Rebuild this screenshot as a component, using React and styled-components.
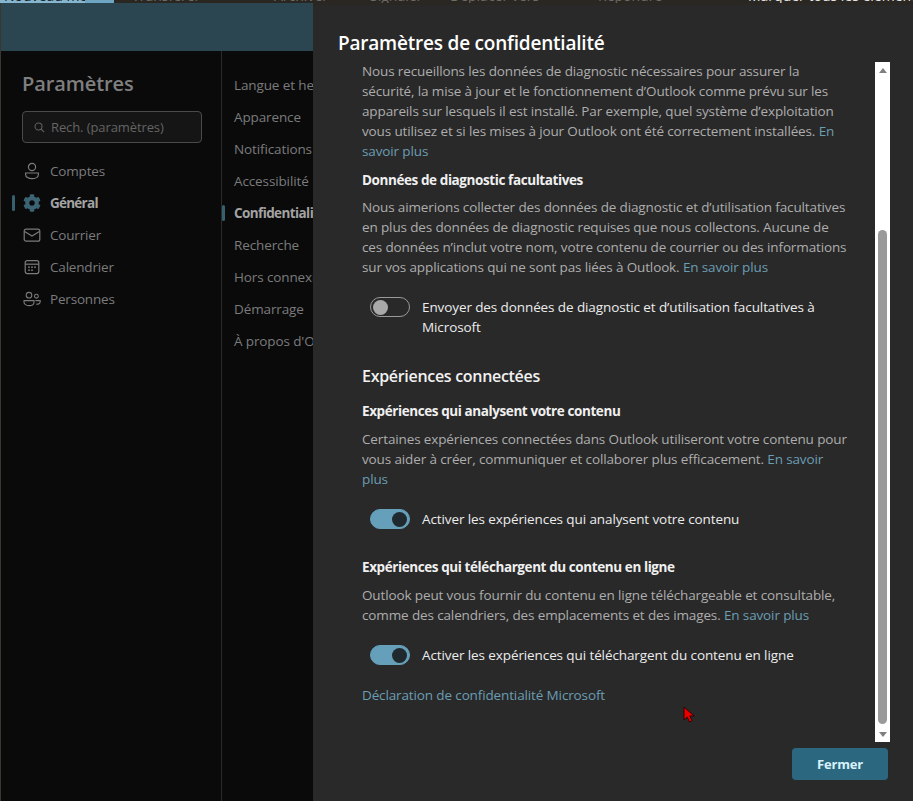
import React from "react";
import styled, { createGlobalStyle } from "styled-components";
import { FaCog } from "react-icons/fa";

const GlobalStyle = createGlobalStyle`
  html, body {
    margin: 0;
    padding: 0;
    background: #222;
  }
  * {
    box-sizing: border-box;
  }
`;

const Page = styled.div`
  position: relative;
  width: 913px;
  height: 801px;
  overflow: hidden;
  display: flex;
  flex-direction: column;
  background: #2a2622;
  font-family: "Open Sans", "Noto Sans", sans-serif;
`;

/* what is left of the mail toolbar behind the settings window */
const TopStrip = styled.div`
  height: 3px;
  flex: none;
  display: flex;
  overflow: hidden;
`;

const StripTab = styled.div`
  width: ${(p) => p.$w}px;
  flex: none;
  height: 3px;
  overflow: hidden;
  display: flex;
  align-items: flex-end;
  background: ${(p) => p.$bg || "transparent"};
  color: ${(p) => p.$color || "#6f6b65"};
  font-size: 14px;
  line-height: 14px;
  white-space: nowrap;
  padding-left: ${(p) => p.$pad || 0}px;
`;

const Main = styled.div`
  flex: 1;
  display: flex;
  min-height: 0;
`;

const SettingsWindow = styled.div`
  width: 313px;
  flex: none;
  display: flex;
  flex-direction: column;
  padding-left: 1px;
  background: #3a3733;
  overflow: hidden;
`;

const WindowHeader = styled.div`
  height: 48px;
  flex: none;
  background: #2b4650;
`;

const WindowBody = styled.div`
  flex: 1;
  display: flex;
  background: #0a0a0b;
`;

const Sidebar = styled.nav`
  width: 221px;
  flex: none;
  padding: 19px 0 0 21px;
  border-right: 1px solid #2b2b2b;
`;

const SidebarTitle = styled.h1`
  margin: 0 0 13px;
  font-size: 20px;
  line-height: 28px;
  font-weight: 600;
  color: #7f7f7f;
  letter-spacing: -0.1px;
`;

const SearchBox = styled.div`
  width: 180px;
  height: 32px;
  display: flex;
  align-items: center;
  gap: 6px;
  padding-left: 11px;
  margin-bottom: 12px;
  background: #151515;
  border: 1px solid #4a4a4a;
  border-radius: 4px;
  color: #646464;
  font-size: 13px;
  letter-spacing: -0.1px;
`;

const NavRow = styled.div`
  position: relative;
  height: 32px;
  display: flex;
  align-items: center;
  gap: 9px;
  padding-left: 1px;
  font-size: 13.5px;
  letter-spacing: ${(p) => (p.$active ? "-0.75px" : "-0.18px")};
  font-weight: ${(p) => (p.$active ? 700 : 400)};
  color: ${(p) => (p.$active ? "#a3a3a3" : "#7b7b7b")};

  &::before {
    content: "";
    display: ${(p) => (p.$active ? "block" : "none")};
    position: absolute;
    left: -10px;
    top: 8px;
    width: 3px;
    height: 16px;
    border-radius: 2px;
    background: #37606f;
  }

  svg {
    flex: none;
    width: 18px;
    height: 18px;
    color: ${(p) => (p.$active ? "#3c6373" : "#7b7b7b")};
  }
`;

const SubNav = styled.div`
  flex: 1;
  min-width: 0;
  padding-top: 18px;
  overflow: hidden;
`;

const SubRow = styled.div`
  position: relative;
  height: 32px;
  display: flex;
  align-items: center;
  padding-left: 12px;
  white-space: nowrap;
  font-size: 13.5px;
  letter-spacing: ${(p) => (p.$active ? "-0.6px" : "-0.12px")};
  font-weight: ${(p) => (p.$active ? 700 : 400)};
  color: ${(p) => (p.$active ? "#a3a3a3" : "#7b7b7b")};

  &::before {
    content: "";
    display: ${(p) => (p.$active ? "block" : "none")};
    position: absolute;
    left: 0;
    top: 8px;
    width: 3px;
    height: 16px;
    border-radius: 2px;
    background: #37606f;
  }
`;

const Dialog = styled.section`
  flex: 1;
  min-width: 0;
  margin-top: 2px;
  display: flex;
  flex-direction: column;
  background: #292929;
  border-radius: 4px 0 0 0;
  padding: 24px 23px 21px 25px;
`;

const DialogTitle = styled.h2`
  margin: 0 0 4px;
  font-size: 19px;
  line-height: 29px;
  font-weight: 600;
  color: #fff;
  letter-spacing: -0.21px;
`;

const ScrollArea = styled.div`
  height: 680px;
  flex: none;
  display: flex;
  justify-content: space-between;
`;

const Content = styled.div`
  width: 490px;
  margin-left: 24px;
  overflow: hidden;
`;

const Para = styled.p`
  margin: ${(p) => p.$top || 0}px 0 0;
  font-size: 13.5px;
  line-height: 20px;
  letter-spacing: -0.13px;
  color: #adadad;
  white-space: nowrap;
`;

const Sub = styled.h4`
  margin: ${(p) => p.$top || 0}px 0 0;
  font-size: 13.5px;
  line-height: 20px;
  font-weight: 700;
  letter-spacing: -0.41px;
  color: #f0f0f0;
`;

const SectionTitle = styled.h3`
  margin: ${(p) => p.$top || 0}px 0 0;
  font-size: 16px;
  line-height: 24px;
  font-weight: 600;
  letter-spacing: -0.3px;
  color: #f2f2f2;
`;

const Link = styled.a`
  color: #6b9db3;
`;

const ToggleRow = styled.div`
  display: flex;
  align-items: flex-start;
  gap: 12px;
  margin: ${(p) => p.$top || 0}px 0 0 8px;
  font-size: 13.5px;
  line-height: 20px;
  letter-spacing: -0.1px;
  color: #ececec;
  white-space: nowrap;
`;

const Toggle = styled.span`
  width: 40px;
  height: 20px;
  flex: none;
  display: flex;
  align-items: center;
  justify-content: ${(p) => (p.$on ? "flex-end" : "flex-start")};
  padding: 0 2px;
  border-radius: 10px;
  background: ${(p) => (p.$on ? "#659fb9" : "transparent")};
  border: 1px solid ${(p) => (p.$on ? "#659fb9" : "#9a9a9a")};

  &::after {
    content: "";
    width: 15px;
    height: 15px;
    border-radius: 50%;
    background: ${(p) => (p.$on ? "#20292e" : "#a9a9a9")};
  }
`;

const ScrollTrack = styled.div`
  width: 15px;
  flex: none;
  display: flex;
  flex-direction: column;
  align-items: center;
  background: #fff;
`;

const Arrow = styled.span`
  flex: none;
  width: 0;
  height: 0;
  margin: ${(p) => (p.$down ? "3px 0 5px" : "6px 0 0")};
  border-left: 4px solid transparent;
  border-right: 4px solid transparent;
  border-bottom: ${(p) => (p.$down ? "0" : "5px solid #808080")};
  border-top: ${(p) => (p.$down ? "5px solid #808080" : "0")};
`;

const Thumb = styled.div`
  width: 9px;
  height: 494px;
  flex: none;
  margin-top: 157px;
  background: #9a9a9a;
  border-radius: 5px;
`;

const Spacer = styled.div`
  flex: 1;
`;

const Footer = styled.div`
  display: flex;
  justify-content: flex-end;
  margin-top: 6px;
  padding-right: 2px;
`;

const CloseButton = styled.button`
  width: 96px;
  height: 32px;
  border: none;
  border-radius: 4px;
  background: #2b6880;
  color: #d9f1fb;
  font-family: inherit;
  font-size: 13px;
  font-weight: 700;
  letter-spacing: -0.2px;
`;

const Cursor = styled.svg`
  position: absolute;
  left: 683px;
  top: 706px;
  width: 13px;
  height: 18px;
`;

const AccountIcon = () => (
  <svg viewBox="0 0 18 18" fill="none" stroke="currentColor" strokeWidth="1.2">
    <circle cx="9" cy="5" r="3.6" />
    <path d="M2.600 11h12.800v1.400c0 2.600-3 4.200-6.400 4.200s-6.400-1.600-6.400-4.200z" />
  </svg>
);

const MailIcon = () => (
  <svg viewBox="0 0 18 18" fill="none" stroke="currentColor" strokeWidth="1.2">
    <rect x="1.200" y="3.200" width="15.600" height="12" rx="2" />
    <path d="M1.600 5.600 9 10l7.400-4.400" />
  </svg>
);

const CalendarIcon = () => (
  <svg viewBox="0 0 18 18" fill="none" stroke="currentColor" strokeWidth="1.2">
    <rect x="2.200" y="2.600" width="13.600" height="13" rx="2" />
    <path d="M2.200 6.200h13.600" />
    <g fill="currentColor" stroke="none">
      <rect x="5.200" y="8.400" width="1.600" height="1.600" />
      <rect x="8.200" y="8.400" width="1.600" height="1.600" />
      <rect x="11.200" y="8.400" width="1.600" height="1.600" />
      <rect x="5.200" y="11.400" width="1.600" height="1.600" />
      <rect x="8.200" y="11.400" width="1.600" height="1.600" />
    </g>
  </svg>
);

const PeopleIcon = () => (
  <svg viewBox="0 0 18 18" fill="none" stroke="currentColor" strokeWidth="1.1">
    <circle cx="6" cy="5.200" r="2.800" />
    <circle cx="13.400" cy="6.200" r="1.900" />
    <path d="M1 10.600h10v1.600c0 2-2.200 3.400-5 3.400s-5-1.400-5-3.400z" />
    <path d="M12.400 10.600h4.800v.8c0 1.600-1.600 2.800-4 2.800" />
  </svg>
);

const SearchIcon = () => (
  <svg width="11" height="11" viewBox="0 0 11 11" fill="none" stroke="#5f5f5f" strokeWidth="1.100">
    <circle cx="4.500" cy="4.500" r="3.500" />
    <path d="M7 7l3.200 3.200" />
  </svg>
);

const navItems = [
  { label: "Comptes", icon: <AccountIcon /> },
  { label: "Général", icon: <FaCog />, active: true },
  { label: "Courrier", icon: <MailIcon /> },
  { label: "Calendrier", icon: <CalendarIcon /> },
  { label: "Personnes", icon: <PeopleIcon /> },
];

const subItems = [
  "Langue et heure",
  "Apparence",
  "Notifications",
  "Accessibilité",
  "Confidentialité",
  "Recherche",
  "Hors connexion",
  "Démarrage",
  "À propos d'Outlook",
];

export default function App() {
  return (
    <>
      <GlobalStyle />
      <Page>
        <TopStrip>
          <StripTab $w={85} $bg="#86b6cf" $color="#16242c" $pad={4}>
            Nouveau message
          </StripTab>
          <StripTab $w={29} $bg="#6ea5c0" />
          <StripTab $w={134} $pad={18}>
            Transférer
          </StripTab>
          <StripTab $w={112} $pad={26}>
            Archiver
          </StripTab>
          <StripTab $w={80} $pad={10}>
            Signaler
          </StripTab>
          <StripTab $w={150} $pad={10}>
            Déplacer vers
          </StripTab>
          <StripTab $w={158} $pad={8}>
            Répondre
          </StripTab>
          <StripTab $w={165} $color="#e4e4e4">
            Marquer tous les éléments
          </StripTab>
        </TopStrip>
        <Main>
          <SettingsWindow>
            <WindowHeader />
            <WindowBody>
              <Sidebar>
                <SidebarTitle>Paramètres</SidebarTitle>
                <SearchBox>
                  <SearchIcon />
                  Rech. (paramètres)
                </SearchBox>
                {navItems.map((item) => (
                  <NavRow key={item.label} $active={item.active}>
                    {item.icon}
                    {item.label}
                  </NavRow>
                ))}
              </Sidebar>
              <SubNav>
                {subItems.map((label) => (
                  <SubRow key={label} $active={label === "Confidentialité"}>
                    {label}
                  </SubRow>
                ))}
              </SubNav>
            </WindowBody>
          </SettingsWindow>

          <Dialog>
            <DialogTitle>Paramètres de confidentialité</DialogTitle>
            <ScrollArea>
              <Content>
                <Para $top={-1}>
                  Nous recueillons les données de diagnostic nécessaires pour assurer la
                  <br />
                  sécurité, la mise à jour et le fonctionnement d’Outlook comme prévu sur les
                  <br />
                  appareils sur lesquels il est installé. Par exemple, quel système d’exploitation
                  <br />
                  vous utilisez et si les mises à jour Outlook ont été correctement installées.{" "}
                  <Link>
                    En
                    <br />
                    savoir plus
                  </Link>
                </Para>
                <Sub $top={9}>Données de diagnostic facultatives</Sub>
                <Para $top={7}>
                  Nous aimerions collecter des données de diagnostic et d’utilisation facultatives
                  <br />
                  en plus des données de diagnostic requises que nous collectons. Aucune de
                  <br />
                  ces données n’inclut votre nom, votre contenu de courrier ou des informations
                  <br />
                  sur vos applications qui ne sont pas liées à Outlook. <Link>En savoir plus</Link>
                </Para>
                <ToggleRow $top={20}>
                  <Toggle />
                  <span>
                    Envoyer des données de diagnostic et d’utilisation facultatives à
                    <br />
                    Microsoft
                  </span>
                </ToggleRow>
                <SectionTitle $top={27}>Expériences connectées</SectionTitle>
                <Sub $top={13}>Expériences qui analysent votre contenu</Sub>
                <Para $top={8}>
                  Certaines expériences connectées dans Outlook utiliseront votre contenu pour
                  <br />
                  vous aider à créer, communiquer et collaborer plus efficacement.{" "}
                  <Link>
                    En savoir
                    <br />
                    plus
                  </Link>
                </Para>
                <ToggleRow $top={20}>
                  <Toggle $on />
                  <span>Activer les expériences qui analysent votre contenu</span>
                </ToggleRow>
                <Sub $top={28}>Expériences qui téléchargent du contenu en ligne</Sub>
                <Para $top={8}>
                  Outlook peut vous fournir du contenu en ligne téléchargeable et consultable,
                  <br />
                  comme des calendriers, des emplacements et des images. <Link>En savoir plus</Link>
                </Para>
                <ToggleRow $top={20}>
                  <Toggle $on />
                  <span>Activer les expériences qui téléchargent du contenu en ligne</span>
                </ToggleRow>
                <Para $top={20}>
                  <Link>Déclaration de confidentialité Microsoft</Link>
                </Para>
              </Content>
              <ScrollTrack>
                <Arrow />
                <Thumb />
                <Spacer />
                <Arrow $down />
              </ScrollTrack>
            </ScrollArea>
            <Footer>
              <CloseButton>Fermer</CloseButton>
            </Footer>
          </Dialog>
        </Main>
        <Cursor viewBox="0 0 13 18">
          <path d="M1 1v13l3.200-3 2.300 5 2.600-1.200-2.300-4.800h4.400z" fill="#e80000" stroke="#300" strokeWidth="1" />
        </Cursor>
      </Page>
    </>
  );
}
